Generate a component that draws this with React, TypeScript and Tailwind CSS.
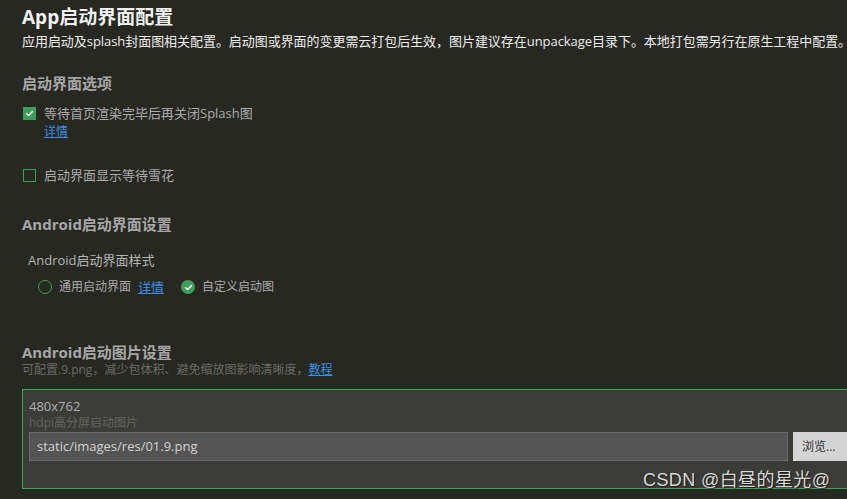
import React from "react";

const FONT = { fontFamily: '"Open Sans", "Noto Sans CJK SC", sans-serif' };

function CheckIcon({ size = 9 }: { size?: number }) {
  return (
    <svg width={size} height={size} viewBox="0 0 10 10" fill="none">
      <path d="M1.8 5.2 L4 7.3 L8.3 2.8" stroke="white" strokeWidth="1.6" strokeLinecap="round" strokeLinejoin="round" />
    </svg>
  );
}

export default function App() {
  return (
    <div className="relative w-[847px] h-[499px] overflow-hidden bg-[#282823]" style={FONT}>
      <div className="flex flex-col pl-[22px]">
        <div className="mt-[5px] h-[24px] leading-[24px] text-[19px] font-bold text-[#f2f2f2] whitespace-nowrap">
          App启动界面配置
        </div>
        <div className="mt-[3px] h-[18px] leading-[18px] text-[13px] text-[#ececec] whitespace-nowrap tracking-[-0.05px]">
          应用启动及splash封面图相关配置。启动图或界面的变更需云打包后生效，图片建议存在unpackage目录下。本地打包需另行在原生工程中配置。
        </div>

        <div className="mt-[23px] h-[20px] leading-[20px] text-[15px] font-bold text-[#a6a6a6]">启动界面选项</div>

        <div className="mt-[11px] h-[18px] flex items-center">
          <div className="ml-[1px] w-[13px] h-[13px] bg-[#3f9d5c] flex items-center justify-center">
            <CheckIcon />
          </div>
          <span className="ml-[8px] leading-[18px] text-[13px] text-[#ababab]">等待首页渲染完毕后再关闭Splash图</span>
        </div>
        <div className="h-[16px] leading-[16px] pl-[22px]">
          <a className="text-[12px] text-[#3b8fe0] underline">详情</a>
        </div>

        <div className="mt-[28px] h-[18px] flex items-center">
          <div className="ml-[1px] w-[13px] h-[13px] border border-[#3f9d5c]" />
          <span className="ml-[8px] leading-[18px] text-[13px] text-[#ababab]">启动界面显示等待雪花</span>
        </div>

        <div className="mt-[30px] h-[20px] leading-[20px] text-[15px] font-bold text-[#a6a6a6]">Android启动界面设置</div>

        <div className="mt-[17px] ml-[6px] h-[18px] leading-[18px] text-[13px] text-[#b4b4b4]">Android启动界面样式</div>

        <div className="mt-[9px] ml-[16px] h-[18px] flex items-center">
          <div className="w-[14px] h-[14px] rounded-full border-[1.5px] border-[#3f9d5c]" />
          <span className="ml-[7px] leading-[18px] text-[12px] text-[#ababab]">通用启动界面</span>
          <a className="ml-[7px] leading-[18px] text-[13px] text-[#3b8fe0] underline">详情</a>
          <div className="ml-[17px] w-[14px] h-[14px] rounded-full bg-[#3f9d5c] flex items-center justify-center">
            <CheckIcon size={9} />
          </div>
          <span className="ml-[7px] leading-[18px] text-[12px] text-[#ababab]">自定义启动图</span>
        </div>

        <div className="mt-[46px] h-[20px] leading-[20px] text-[15px] font-bold text-[#a6a6a6]">Android启动图片设置</div>
        <div className="h-[16px] leading-[16px] text-[12px] text-[#6a6a66] whitespace-nowrap">
          可配置.9.png，减少包体积、避免缩放图影响清晰度，<a className="text-[#3b8fe0] underline">教程</a>
        </div>

        <div className="mt-[11px] w-[880px] h-[100px] border border-[#3aa95c] bg-[#3b3b37] pl-[6px] pt-[8px] flex flex-col">
          <div className="h-[16px] leading-[16px] text-[13px] text-[#b0b0b0]">480x762</div>
          <div className="mt-[2px] h-[14px] leading-[14px] text-[12px] text-[#65655f]">hdpi高分屏启动图片</div>
          <div className="mt-[2px] flex items-stretch h-[29px]">
            <div className="w-[759px] bg-[#545454] border border-[#6a6a6a] pl-[7px] flex items-center text-[13px] text-[#d2d2d2]">
              static/images/res/01.9.png
            </div>
            <div className="ml-[5px] w-[64px] bg-[#d4d4d4] pl-[9px] flex items-center text-[12px] text-[#303030]">
              浏览...
            </div>
          </div>
        </div>
      </div>

      <div
        className="absolute left-[643px] top-[468px] h-[24px] leading-[24px] text-[18px] tracking-[0.4px] text-[#d8d8d8] whitespace-nowrap"
        style={{ fontFamily: '"Liberation Sans", "Noto Sans CJK SC", sans-serif', textShadow: "1px 1px 1px rgba(0,0,0,0.6)" }}
      >
        CSDN @白昼的星光@
      </div>
    </div>
  );
}
